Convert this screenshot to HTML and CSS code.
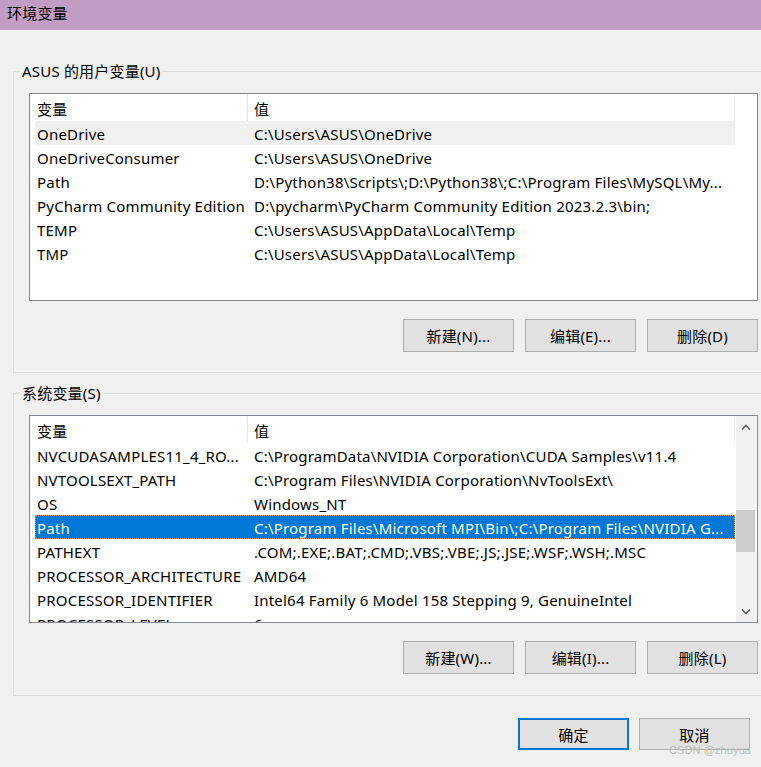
FILE: index.html
```html
<!DOCTYPE html>
<html lang="zh-CN">
<head>
    <meta charset="UTF-8">
    <title>环境变量</title>
    <link rel="stylesheet" href="styles.css">
</head>
<body>
    <div class="titlebar">环境变量</div>
    <div class="dialog">
        <fieldset class="group group-user">
            <legend>ASUS 的用户变量(U)</legend>
            <div class="group-body">
                <div class="list">
                    <div class="list-body">
                        <div class="list-head">
                            <span class="col-name">变量</span>
                            <span class="col-value">值</span>
                        </div>
                        <div class="row hover"><span class="col-name">OneDrive</span><span class="col-value">C:\Users\ASUS\OneDrive</span></div>
                        <div class="row"><span class="col-name">OneDriveConsumer</span><span class="col-value">C:\Users\ASUS\OneDrive</span></div>
                        <div class="row"><span class="col-name">Path</span><span class="col-value">D:\Python38\Scripts\;D:\Python38\;C:\Program Files\MySQL\My...</span></div>
                        <div class="row"><span class="col-name">PyCharm Community Edition</span><span class="col-value">D:\pycharm\PyCharm Community Edition 2023.2.3\bin;</span></div>
                        <div class="row"><span class="col-name">TEMP</span><span class="col-value">C:\Users\ASUS\AppData\Local\Temp</span></div>
                        <div class="row"><span class="col-name">TMP</span><span class="col-value">C:\Users\ASUS\AppData\Local\Temp</span></div>
                    </div>
                    <div class="list-spacer"></div>
                </div>
                <div class="buttons">
                    <button class="btn">新建(N)...</button>
                    <button class="btn">编辑(E)...</button>
                    <button class="btn">删除(D)</button>
                </div>
            </div>
        </fieldset>

        <fieldset class="group group-system">
            <legend>系统变量(S)</legend>
            <div class="group-body">
                <div class="list">
                    <div class="list-body">
                        <div class="list-head">
                            <span class="col-name">变量</span>
                            <span class="col-value">值</span>
                        </div>
                        <div class="row"><span class="col-name">NVCUDASAMPLES11_4_RO...</span><span class="col-value">C:\ProgramData\NVIDIA Corporation\CUDA Samples\v11.4</span></div>
                        <div class="row"><span class="col-name">NVTOOLSEXT_PATH</span><span class="col-value">C:\Program Files\NVIDIA Corporation\NvToolsExt\</span></div>
                        <div class="row"><span class="col-name">OS</span><span class="col-value">Windows_NT</span></div>
                        <div class="row selected"><span class="col-name">Path</span><span class="col-value">C:\Program Files\Microsoft MPI\Bin\;C:\Program Files\NVIDIA G...</span></div>
                        <div class="row"><span class="col-name">PATHEXT</span><span class="col-value">.COM;.EXE;.BAT;.CMD;.VBS;.VBE;.JS;.JSE;.WSF;.WSH;.MSC</span></div>
                        <div class="row"><span class="col-name">PROCESSOR_ARCHITECTURE</span><span class="col-value">AMD64</span></div>
                        <div class="row"><span class="col-name">PROCESSOR_IDENTIFIER</span><span class="col-value">Intel64 Family 6 Model 158 Stepping 9, GenuineIntel</span></div>
                        <div class="row"><span class="col-name">PROCESSOR_LEVEL</span><span class="col-value">6</span></div>
                    </div>
                    <div class="scrollbar">
                        <div class="arrow">
                            <svg width="10" height="6" viewBox="0 0 10 6"><path d="M1 5.5 L5 1.5 L9 5.5" fill="none" stroke="#606060" stroke-width="1.6"/></svg>
                        </div>
                        <div class="track">
                            <div class="thumb"></div>
                        </div>
                        <div class="arrow">
                            <svg width="10" height="6" viewBox="0 0 10 6"><path d="M1 0.5 L5 4.5 L9 0.5" fill="none" stroke="#606060" stroke-width="1.6"/></svg>
                        </div>
                    </div>
                </div>
                <div class="buttons">
                    <button class="btn">新建(W)...</button>
                    <button class="btn">编辑(I)...</button>
                    <button class="btn">删除(L)</button>
                </div>
            </div>
        </fieldset>

        <div class="footer">
            <button class="btn btn-default">确定</button>
            <button class="btn">取消</button>
        </div>
    </div>
    <div class="watermark">CSDN @zhuyua</div>
</body>
</html>
```

FILE: styles.css
```css
/* Windows dialog look */
html, body {
    margin: 0;
    padding: 0;
    width: 761px;
    height: 767px;
    overflow: hidden;
    background-color: #f0f0f0;
    font-family: "Noto Sans", "Noto Sans CJK SC", sans-serif;
    font-size: 15px;
    letter-spacing: 0.2px;
    color: #000;
}

body {
    position: relative;
}

.titlebar {
    height: 30px;
    line-height: 27px;
    padding-left: 7px;
    background-color: #c19cc5;
    color: #000;
}

.dialog {
    padding-left: 13px;
}

/* Group boxes */
.group {
    width: 800px;
    margin: 0;
    padding: 0;
    border: 1px solid #dcdcdc;
    box-sizing: border-box;
}

.group-user {
    margin-top: 31px;
    height: 312px;
}

.group-system {
    margin-top: 10px;
    height: 313px;
}

.group legend {
    margin-left: 6px;
    padding: 0 2px;
    line-height: 20px;
}

.group-body {
    padding: 12px 0 0 15px;
}

/* List views */
.list {
    width: 729px;
    height: 208px;
    box-sizing: border-box;
    border: 1px solid #828790;
    background-color: #fff;
    display: flex;
    overflow: hidden;
}

.list-body {
    width: 700px;
    margin-left: 5px;
    overflow: hidden;
}

.list-spacer {
    flex: 1;
}

.list-head {
    display: flex;
    height: 27px;
    line-height: 30px;
    border-right: 1px solid #f0f0f0;
}

.list-head .col-name {
    width: 210px;
    padding-left: 2px;
    border-right: 1px solid #e5e5e5;
}

.list-head .col-value {
    padding-left: 6px;
}

.row {
    display: flex;
    height: 24px;
    line-height: 26px;
    white-space: nowrap;
    box-sizing: border-box;
}

.row .col-name {
    width: 217px;
    flex-shrink: 0;
    padding-left: 2px;
    box-sizing: border-box;
    overflow: hidden;
}

.row .col-value {
    padding-left: 2px;
    overflow: hidden;
}

.row.hover {
    background-color: #f0f0f0;
}

.row.selected {
    background-color: #0078d7;
    color: #fff;
    outline: 1px dotted #f7941d;
    outline-offset: -1px;
}

/* Scrollbar */
.scrollbar {
    width: 20px;
    margin-left: 1px;
    background-color: #f0f0f0;
    display: flex;
    flex-direction: column;
}

.arrow {
    height: 21px;
    display: flex;
    align-items: center;
    justify-content: center;
}

.track {
    flex: 1;
    padding-top: 73px;
}

.thumb {
    width: 19px;
    height: 42px;
    background-color: #cdcdcd;
}

/* Buttons */
.buttons {
    width: 729px;
    display: flex;
    justify-content: flex-end;
    gap: 11px;
    margin-top: 18px;
}

.btn {
    width: 111px;
    height: 33px;
    margin: 0;
    padding: 0;
    border: 1px solid #adadad;
    background-color: #e1e1e1;
    font-family: inherit;
    font-size: 15px;
    letter-spacing: 0.2px;
    color: #000;
}

.btn-default {
    border: 2px solid #0078d7;
}

.footer {
    width: 737px;
    display: flex;
    justify-content: flex-end;
    gap: 10px;
    margin-top: 22px;
}

.footer .btn {
    height: 32px;
}

.watermark {
    position: absolute;
    left: 669px;
    top: 742px;
    font-family: "Liberation Sans", sans-serif;
    font-size: 11px;
    line-height: 16px;
    white-space: nowrap;
    color: #bdbdbd;
    letter-spacing: 0.1px;
}
```
